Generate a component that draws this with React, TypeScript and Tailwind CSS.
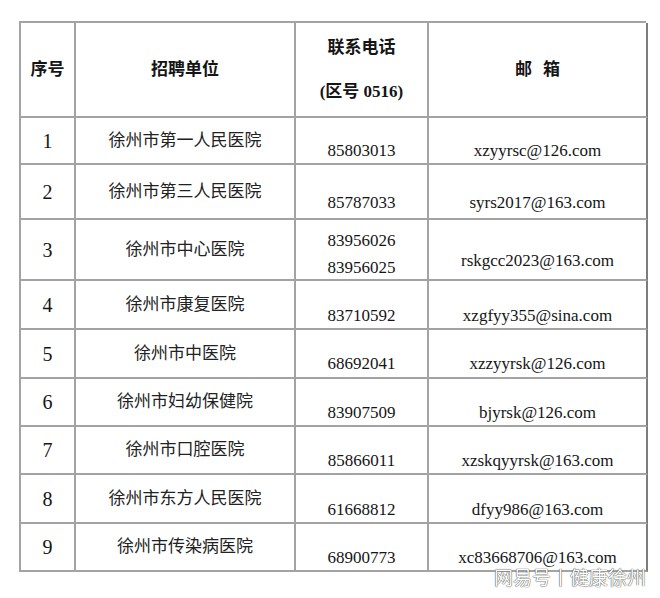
const rows = [
  { no: '1', unit: '徐州市第一人民医院', phones: ['85803013'], email: 'xzyyrsc@126.com', pPad: 'pb-[2px]', ePad: 'pb-[2px]' },
  { no: '2', unit: '徐州市第三人民医院', phones: ['85787033'], email: 'syrs2017@163.com', pPad: 'pb-[5px]', ePad: 'pb-[5px]' },
  { no: '3', unit: '徐州市中心医院', phones: ['83956026', '83956025'], email: 'rskgcc2023@163.com', pPad: 'pb-[1px]', ePad: 'pb-[8px]' },
  { no: '4', unit: '徐州市康复医院', phones: ['83710592'], email: 'xzgfyy355@sina.com', pPad: 'pb-[2px]', ePad: 'pb-[2px]' },
  { no: '5', unit: '徐州市中医院', phones: ['68692041'], email: 'xzzyyrsk@126.com', pPad: 'pb-[3px]', ePad: 'pb-[3px]' },
  { no: '6', unit: '徐州市妇幼保健院', phones: ['83907509'], email: 'bjyrsk@126.com', pPad: 'pb-[2px]', ePad: 'pb-[2px]' },
  { no: '7', unit: '徐州市口腔医院', phones: ['85866011'], email: 'xzskqyyrsk@163.com', pPad: 'pb-[2px]', ePad: 'pb-[2px]' },
  { no: '8', unit: '徐州市东方人民医院', phones: ['61668812'], email: 'dfyy986@163.com', pPad: 'pb-[2px]', ePad: 'pb-[2px]' },
  { no: '9', unit: '徐州市传染病医院', phones: ['68900773'], email: 'xc83668706@163.com', pPad: 'pb-[2px]', ePad: 'pb-[2px]' },
];

const cell = 'border-r-2 border-b-2 border-[#a3a3a3]';

export default function App() {
  return (
    <div className="relative h-[598px] w-[660px] bg-white pl-[19px] pt-[21px] text-[#151515] [font-family:'Liberation_Serif','Noto_Sans_CJK_SC',serif]">
      <div className="grid w-[627px] grid-cols-[55px_220px_133px_219px] grid-rows-[95px_47px_55px_61px_49px_49px_48px_48px_49px_48px] border-l-2 border-t-2 border-[#a3a3a3]">
        {/* header */}
        <div className={`${cell} flex items-center justify-center text-[17px] font-bold`}>序号</div>
        <div className={`${cell} flex items-center justify-center text-[17px] font-bold`}>招聘单位</div>
        <div className={`${cell} flex flex-col items-center justify-center gap-[24px] text-[17px] leading-[20px] font-bold`}>
          <span>联系电话</span>
          <span>(区号 0516)</span>
        </div>
        <div className={`${cell} flex items-center justify-center gap-[11px] text-[17px] font-bold border-r-[#7d7d7d]`}>
          <span>邮</span>
          <span>箱</span>
        </div>

        {rows.map((r) => (
          <div key={r.no} className="contents">
            <div className={`${cell} flex items-center justify-center text-[20px]`}>{r.no}</div>
            <div className={`${cell} flex items-center justify-center text-[17px] text-[#222]`}>{r.unit}</div>
            <div className={`${cell} flex flex-col items-center justify-end gap-[7px] text-[17px] leading-[20px] ${r.pPad}`}>
              {r.phones.map((p) => (
                <span key={p}>{p}</span>
              ))}
            </div>
            <div className={`${cell} flex flex-col items-center justify-end text-[17px] leading-[20px] border-r-[#7d7d7d] ${r.ePad}`}>
              {r.email}
            </div>
          </div>
        ))}
      </div>

      <div className="absolute right-[14px] top-[566px] text-[19px] leading-[22px] text-white [font-family:'Noto_Sans_CJK_SC',sans-serif] [text-shadow:0_0_1px_#444,0_0_1px_#444]">
        网易号丨健康徐州
      </div>
    </div>
  );
}
